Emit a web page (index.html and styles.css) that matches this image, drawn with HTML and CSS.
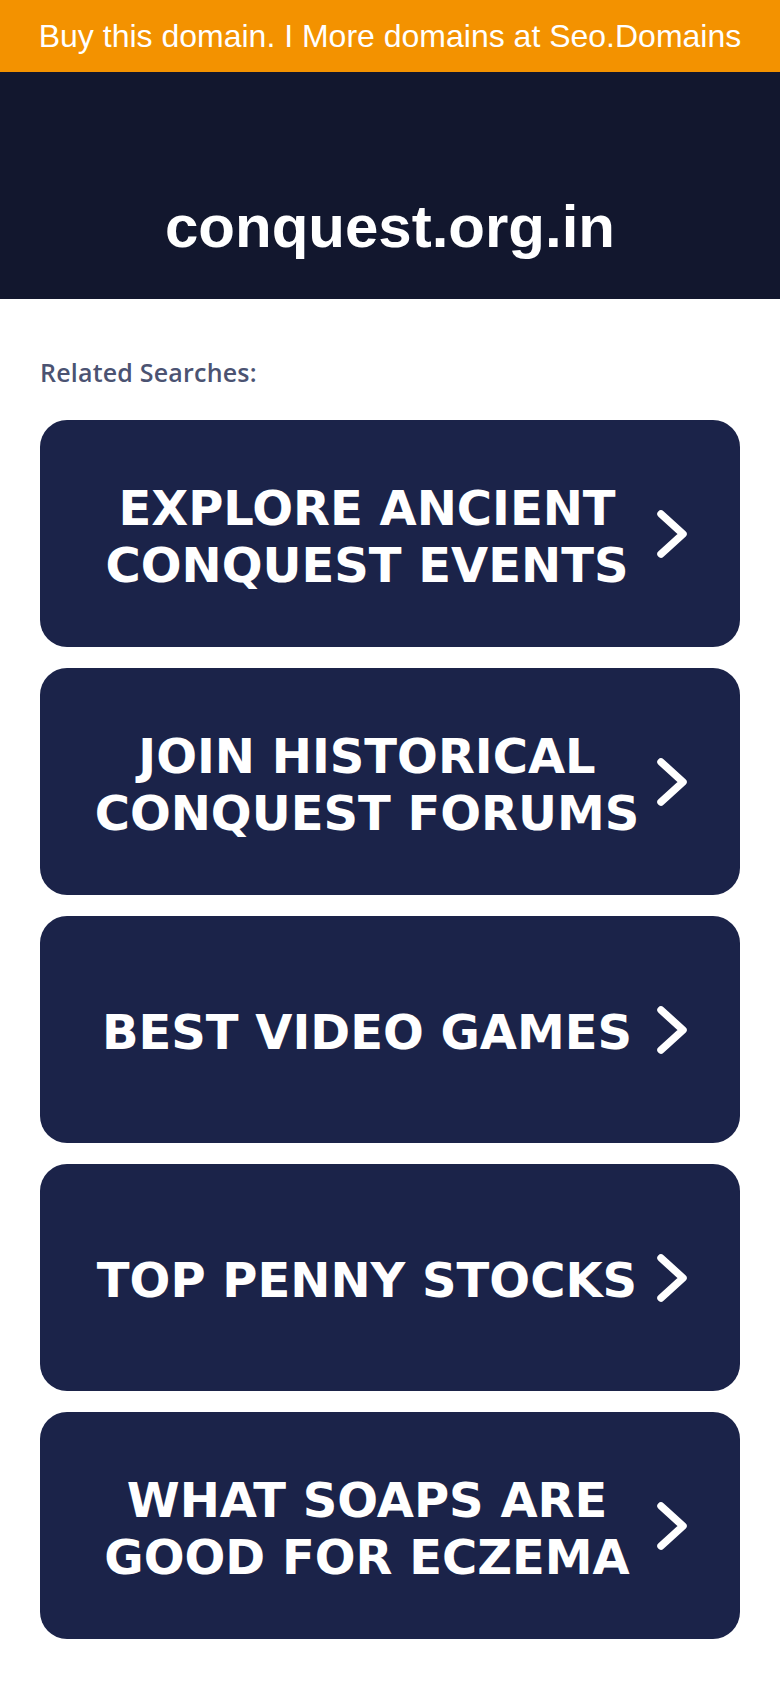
FILE: index.html
```html
<!DOCTYPE html>
<html lang="en">
<head>
<meta charset="utf-8">
<title>conquest.org.in</title>
<link rel="stylesheet" href="styles.css">
</head>
<body>
<div class="topbar">Buy this domain. I More domains at Seo.Domains</div>
<header class="hero"><h1 class="domain">conquest.org.in</h1></header>
<main class="content">
  <p class="related">Related Searches:</p>
  <div class="cards">
    <a class="card" href="#"><span class="card-text">EXPLORE ANCIENT CONQUEST EVENTS</span><svg class="chev" viewBox="0 0 36 54"><polyline points="7,7 29,27 7,47"/></svg></a>
    <a class="card" href="#"><span class="card-text">JOIN HISTORICAL CONQUEST FORUMS</span><svg class="chev" viewBox="0 0 36 54"><polyline points="7,7 29,27 7,47"/></svg></a>
    <a class="card" href="#"><span class="card-text">BEST VIDEO GAMES</span><svg class="chev" viewBox="0 0 36 54"><polyline points="7,7 29,27 7,47"/></svg></a>
    <a class="card" href="#"><span class="card-text">TOP PENNY STOCKS</span><svg class="chev" viewBox="0 0 36 54"><polyline points="7,7 29,27 7,47"/></svg></a>
    <a class="card" href="#"><span class="card-text">WHAT SOAPS ARE GOOD FOR ECZEMA</span><svg class="chev" viewBox="0 0 36 54"><polyline points="7,7 29,27 7,47"/></svg></a>
  </div>
</main>
</body>
</html>
```
FILE: styles.css
```css
* { box-sizing: border-box; }
html, body { margin: 0; padding: 0; background: #ffffff; }
body { font-family: "Liberation Sans", Arial, sans-serif; }

.topbar {
  height: 72px;
  background: #f39200;
  color: #ffffff;
  font-family: "Liberation Sans", Arial, sans-serif;
  font-size: 32px;
  display: flex;
  align-items: center;
  justify-content: center;
  white-space: nowrap;
}

.hero {
  height: 227px;
  background: #12172e;
  padding-top: 120px;
}
.domain {
  margin: 0;
  text-align: center;
  color: #ffffff;
  font-family: "Liberation Sans", Arial, sans-serif;
  font-weight: 700;
  font-size: 60px;
  line-height: 69px;
}

.content { padding: 0 40px 40px; }

.related {
  margin: 0;
  padding-top: 58px;
  height: 121px;
  color: #4b5372;
  font-family: "Open Sans", sans-serif;
  font-weight: 600;
  font-size: 25px;
  letter-spacing: 0.2px;
  line-height: 30px;
}

.cards { display: flex; flex-direction: column; gap: 21px; }

.card {
  height: 227px;
  border-radius: 27px;
  background: #1b2349;
  display: flex;
  align-items: center;
  padding: 0 50px 0 44px;
  text-decoration: none;
}
.card-text {
  flex: 1;
  text-align: center;
  color: #ffffff;
  font-family: "DejaVu Sans", Verdana, sans-serif;
  font-weight: 700;
  font-size: 48px;
  line-height: 57px;
  padding-top: 6px;
}
.chev {
  width: 36px;
  height: 54px;
  margin-left: 4px;
  flex: none;
  filter: blur(0.5px);
}
.chev polyline {
  fill: none;
  stroke: #ffffff;
  stroke-width: 7.5;
  stroke-linecap: round;
  stroke-linejoin: round;
}
```
